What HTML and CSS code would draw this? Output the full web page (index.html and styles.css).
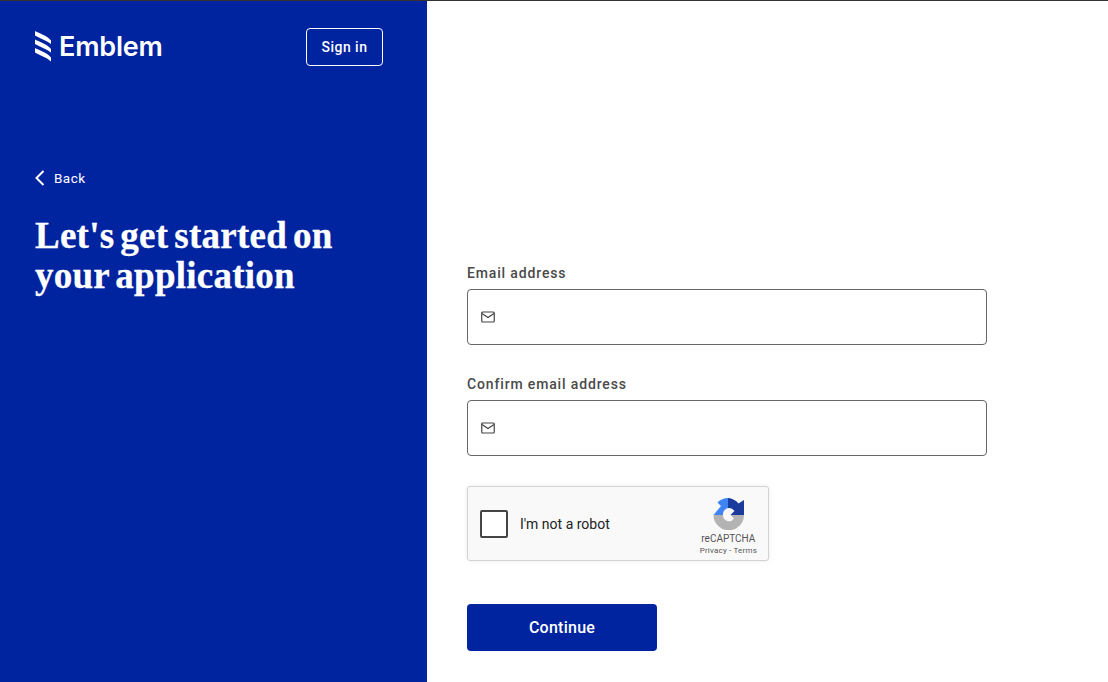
FILE: index.html
```html
<!DOCTYPE html>
<html lang="en">
<head>
    <meta charset="UTF-8">
    <meta name="viewport" content="width=device-width, initial-scale=1.0">
    <title>Emblem - Application</title>
    <link rel="stylesheet" href="styles.css">
</head>
<body>
    <div class="page">
        <aside class="side">
            <div class="side-top">
                <a class="logo" href="#">
                    <svg class="logo-mark" width="16" height="31" viewBox="0 0 16 31">
                        <path d="M0 0 C5 2.500 11 4 16 9.500 L16 13 C11 9 5 7.500 0 4.500 Z" fill="#fff"/>
                        <path d="M0 8.500 C5 11 11 12.500 16 18 L16 21.500 C11 17.500 5 16 0 13 Z" fill="#fff"/>
                        <path d="M0 17 C5 19.500 11 21 16 26.500 L16 30.500 C11 26 5 24.500 0 21.500 Z" fill="#fff"/>
                    </svg>
                    <span class="logo-text">Emblem</span>
                </a>
                <button type="button" class="signin">Sign in</button>
            </div>
            <a class="back" href="#">
                <svg width="10" height="16" viewBox="0 0 10 16">
                    <path d="M8.500 1 L1.500 8 L8.500 15" fill="none" stroke="#fff" stroke-width="2"/>
                </svg>
                <span>Back</span>
            </a>
            <h1>Let's get started on your application</h1>
        </aside>

        <main class="main">
            <form class="form">
                <label class="label" for="email">Email address</label>
                <div class="field">
                    <svg class="mail" width="14" height="12" viewBox="0 0 14 12">
                        <rect x="0.750" y="1" width="12.500" height="10" rx="1" fill="none" stroke="#444" stroke-width="1.200"/>
                        <path d="M1 2.500 L7 6.500 L13 2.500" fill="none" stroke="#444" stroke-width="1.200"/>
                    </svg>
                    <input type="email" id="email">
                </div>

                <label class="label" for="confirmEmail">Confirm email address</label>
                <div class="field">
                    <svg class="mail" width="14" height="12" viewBox="0 0 14 12">
                        <rect x="0.750" y="1" width="12.500" height="10" rx="1" fill="none" stroke="#444" stroke-width="1.200"/>
                        <path d="M1 2.500 L7 6.500 L13 2.500" fill="none" stroke="#444" stroke-width="1.200"/>
                    </svg>
                    <input type="email" id="confirmEmail">
                </div>

                <div class="captcha">
                    <span class="captcha-box"></span>
                    <span class="captcha-text">I'm not a robot</span>
                    <div class="captcha-brand">
                        <svg class="captcha-logo" width="32" height="32" viewBox="0 0 32 32">
                            <path d="M0.500 17 H10 A6 6 0 0 0 21 20.500 L17.500 17 H31 A15.200 15.200 0 0 1 0.500 17 Z" fill="#b3b3b3"/>
                            <path d="M15 0 A15.500 15.500 0 0 0 4.500 4.500 L8 8 L0.500 17 H10 A6.500 6.500 0 0 1 15 10 Z" fill="#3f84f4"/>
                            <path d="M15 0 A15.500 15.500 0 0 1 25.500 5.500 L31 2 V17 H17.500 L21.500 13 A7 7 0 0 0 15 10 Z" fill="#1a3a9c"/>
                        </svg>
                        <span class="captcha-name">reCAPTCHA</span>
                        <span class="captcha-links">Privacy - Terms</span>
                    </div>
                </div>

                <button type="button" class="continue">Continue</button>
            </form>
        </main>
    </div>
</body>
</html>
```

FILE: styles.css
```css
* {
    box-sizing: border-box;
}

body {
    margin: 0;
    font-family: Roboto, "Liberation Sans", sans-serif;
    background: #fff;
    color: #333;
}

.page {
    display: flex;
    height: 682px;
    overflow: hidden;
    border-top: 1px solid #333;
}

/* Left panel */
.side {
    width: 427px;
    flex-shrink: 0;
    padding: 27px 44px 0 35px;
    background: #0023a0;
    color: #fff;
}

.side-top {
    display: flex;
    justify-content: space-between;
    align-items: center;
    height: 38px;
}

.logo {
    display: flex;
    align-items: center;
    gap: 8px;
    color: #fff;
    text-decoration: none;
}

.logo-mark {
    margin-bottom: 2px;
}

.logo-text {
    padding-bottom: 2px;
    font-family: Inter, sans-serif;
    font-size: 27px;
    font-weight: 600;
    letter-spacing: -0.2px;
}

.signin {
    width: 77px;
    height: 38px;
    padding: 0;
    background: transparent;
    color: #fff;
    border: 1px solid #fff;
    border-radius: 4px;
    font-family: Roboto, sans-serif;
    font-size: 14px;
    font-weight: 500;
    letter-spacing: 0.45px;
}

.back {
    display: flex;
    align-items: center;
    gap: 9px;
    margin-top: 103px;
    height: 18px;
    color: #fff;
    font-size: 13.5px;
    letter-spacing: 0.45px;
    text-decoration: none;
}

h1 {
    margin: 29px 0 0;
    font-family: "Liberation Serif", serif;
    font-size: 37px;
    font-weight: 700;
    line-height: 40px;
    letter-spacing: 0.25px;
    word-spacing: -3.5px;
    -webkit-text-stroke: 0.3px #fff;
}

/* Form */
.main {
    flex: 1;
    padding: 264px 0 0 40px;
}

.form {
    width: 520px;
}

.label {
    display: block;
    height: 16px;
    margin-top: 31px;
    margin-bottom: 8px;
    font-size: 14px;
    font-weight: 500;
    line-height: 16px;
    letter-spacing: 0.85px;
    color: #4a4a4a;
}

.label:first-child {
    margin-top: 0;
}

.field {
    display: flex;
    align-items: center;
    gap: 9px;
    height: 56px;
    padding-left: 13px;
    border: 1px solid #666;
    border-radius: 4px;
}

.field input {
    flex: 1;
    height: 100%;
    border: none;
    outline: none;
    background: transparent;
    font-size: 14px;
}

/* Captcha */
.captcha {
    display: flex;
    align-items: center;
    width: 302px;
    height: 75px;
    margin-top: 30px;
    padding: 0 11px 0 12px;
    background: #f9f9f9;
    border: 1px solid #d3d3d3;
    border-radius: 3px;
    box-shadow: 0 0 4px rgba(0, 0, 0, 0.08);
}

.captcha-box {
    width: 28px;
    height: 28px;
    background: #fff;
    border: 2px solid #444;
    border-radius: 2px;
}

.captcha-text {
    margin-left: 12px;
    font-size: 14px;
    color: #222;
}

.captcha-brand {
    display: flex;
    flex-direction: column;
    align-items: center;
    margin-left: auto;
    padding-top: 8px;
    color: #555;
}

.captcha-logo {
    margin-left: 2px;
}

.captcha-name {
    margin-top: 2px;
    font-size: 10px;
    line-height: 13px;
}

.captcha-links {
    font-size: 8px;
    line-height: 12px;
    letter-spacing: 0.2px;
    white-space: nowrap;
}

.continue {
    display: block;
    width: 190px;
    height: 47px;
    margin-top: 43px;
    padding-bottom: 2px;
    background: #0023a0;
    color: #fff;
    border: none;
    border-radius: 4px;
    font-family: Roboto, sans-serif;
    font-size: 16px;
    font-weight: 500;
    letter-spacing: 0.25px;
}
```
